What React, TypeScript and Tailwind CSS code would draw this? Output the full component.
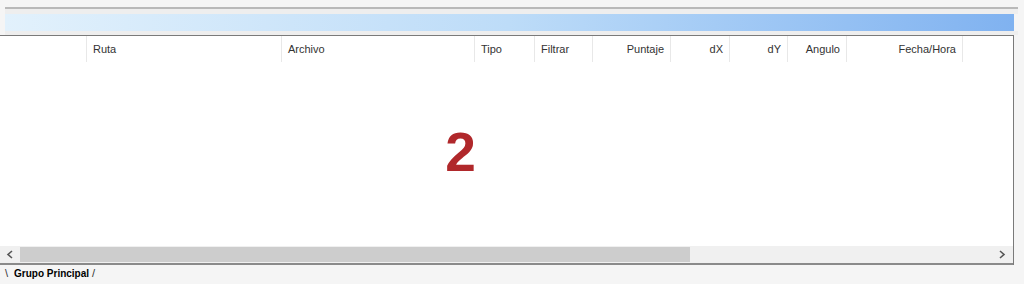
const columns = [
  { label: "", w: 87, align: "left" },
  { label: "Ruta", w: 195, align: "left" },
  { label: "Archivo", w: 193, align: "left" },
  { label: "Tipo", w: 60, align: "left" },
  { label: "Filtrar", w: 58, align: "left" },
  { label: "Puntaje", w: 78, align: "right" },
  { label: "dX", w: 59, align: "right" },
  { label: "dY", w: 58, align: "right" },
  { label: "Angulo", w: 59, align: "right" },
  { label: "Fecha/Hora", w: 116, align: "right" },
];

export default function App() {
  return (
    <div className="w-[1024px] h-[284px] bg-[#f5f5f5] flex flex-col overflow-hidden font-['Liberation_Sans',Arial,sans-serif]">
      <div className="h-[7px]" />
      <div className="h-[2px] bg-[#b9b9b9] ml-[5px] mr-[6px]" />
      <div className="h-[5px] bg-[#eeeeee] ml-[5px] mr-[6px]" />
      <div className="h-[17px] ml-[5px] mr-[10px] bg-gradient-to-r from-[#e2f1fc] via-[#bddcf8] to-[#80b2f0]" />
      <div className="h-[4px] bg-[#eeeeee] ml-[5px] mr-[6px]" />

      <div className="mr-[10px] h-[230px] flex flex-col bg-white border-t border-r border-[#7a7a7a]">
        <div className="flex h-[26px] shrink-0">
          {columns.map((c, i) => (
            <div
              key={i}
              style={{ width: c.w }}
              className={`shrink-0 h-full flex items-center px-[6px] text-[11px] text-[#333333] border-r border-[#e8e8e8] ${
                c.align === "right" ? "justify-end" : "justify-start"
              }`}
            >
              {c.label}
            </div>
          ))}
        </div>
        <div className="flex-1 flex items-start justify-center">
          <span className="mt-[63px] mr-[92px] text-[55px] leading-none font-bold text-[#b0282b]">
            2
          </span>
        </div>
        <div className="h-[17px] shrink-0 flex items-center bg-[#f0f0f0]">
          <div className="w-[20px] h-full flex items-center justify-center">
            <svg width="8" height="9" viewBox="0 0 8 9">
              <path d="M6 1 L2 4.5 L6 8" fill="none" stroke="#555" strokeWidth="1.6" />
            </svg>
          </div>
          <div className="w-[670px] h-[15px] bg-[#cdcdcd]" />
          <div className="flex-1" />
          <div className="w-[22px] h-full flex items-center justify-center">
            <svg width="8" height="9" viewBox="0 0 8 9">
              <path d="M2 1 L6 4.5 L2 8" fill="none" stroke="#555" strokeWidth="1.6" />
            </svg>
          </div>
        </div>
        <div className="h-[2px] bg-[#8a8a8a] shrink-0" />
      </div>

      <div className="h-[17px] flex items-center pl-[5px] text-[10px] font-bold text-black">
        <span className="text-[#333] font-normal text-[11px]">\</span>
        <span className="pl-[6px] pr-[3px]">Grupo Principal</span>
        <span className="text-[#333] font-normal text-[11px]">/</span>
      </div>
    </div>
  );
}
